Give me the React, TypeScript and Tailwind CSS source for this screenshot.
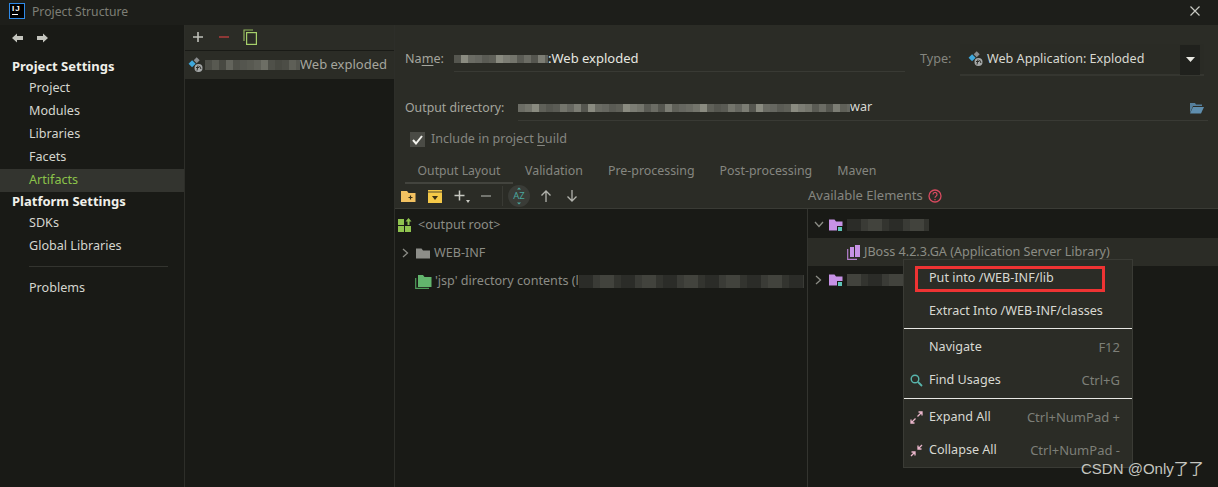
import React from "react";

const PAL = ["#5f6058", "#6b6c64", "#7c7d74", "#5a5b54", "#8a8b80", "#666760", "#55564f", "#74756c"];
const DARK = ["#2b2c28", "#383934", "#33342f", "#42433d", "#2e2f2a", "#3a3b36"];

function Blur({ w, h = 10, seed = 1, dark = false, cls = "" }: { w: number; h?: number; seed?: number; dark?: boolean; cls?: string }) {
  const pal = dark ? DARK : PAL;
  const n = Math.ceil(w / 7);
  return (
    <span className={"inline-flex shrink-0 overflow-hidden blur-[0.6px] " + cls} style={{ width: w, height: h }}>
      {Array.from({ length: n }, (_, i) => (
        <span key={i} className="block h-full w-[7px] shrink-0" style={{ background: pal[(i * 5 + seed * 3 + ((i * i) % 3)) % pal.length] }} />
      ))}
    </span>
  );
}

function WebIcon({ cls = "" }: { cls?: string }) {
  return (
    <svg width="16" height="16" viewBox="0 0 16 16" className={"shrink-0 " + cls}>
      <rect x="1.6" y="4.2" width="5" height="5" transform="rotate(45 4.1 6.7)" fill="#3fa8dc" />
      <rect x="6.6" y="1.2" width="4.2" height="4.2" transform="rotate(45 8.7 3.3)" fill="#8a8d8f" />
      <circle cx="10.5" cy="11" r="4" fill="#a5a8a8" />
      <path d="M8 10.5h3M10 8.5l-1 5M11.5 9l1.5 3" stroke="#2b2b26" strokeWidth="1" fill="none" />
    </svg>
  );
}

function FolderIcon({ color = "#8d8e89" }: { color?: string }) {
  return (
    <svg width="16" height="16" viewBox="0 0 16 16" className="shrink-0">
      <path d="M1 3.5h5.5l1.5 2h7v8H1z" fill={color} />
    </svg>
  );
}

function ModFolder() {
  return (
    <svg width="16" height="16" viewBox="0 0 16 16" className="shrink-0">
      <path d="M1 2.5h5.5l1.5 2h6.5v9H1z" fill="#c792e6" />
      <rect x="9.5" y="9.5" width="5" height="5" fill="#5fc4b8" stroke="#1a1b17" strokeWidth="1" />
    </svg>
  );
}

function SectionTitle({ children }: { children: React.ReactNode }) {
  return <div className="flex h-[20px] items-center pl-[12px] text-[13px] font-bold text-[#f0f0ea]">{children}</div>;
}

function NavItem({ children, active = false }: { children: React.ReactNode; active?: boolean }) {
  return (
    <div className={"flex h-[23px] items-center pl-[29px] " + (active ? "bg-[#33342f] text-[#8bc34a]" : "text-[#d5d6cf]")}>{children}</div>
  );
}

function U({ children }: { children: React.ReactNode }) {
  return <span className="underline underline-offset-2">{children}</span>;
}

function MenuRow({ icon, label, keys }: { icon?: React.ReactNode; label: string; keys?: string }) {
  return (
    <div className="flex h-[33px] items-center pr-[12px] text-[#d8d9d2]">
      <span className="flex w-[25px] shrink-0 justify-start pl-[6px]">{icon}</span>
      <span className="flex-1">{label}</span>
      {keys && <span className="text-[13px] text-[#7d7f78]">{keys}</span>}
    </div>
  );
}

function Sep() {
  return <div className="h-px bg-[#e8e8e4]" />;
}

export default function App() {
  return (
    <div className="flex h-[487px] w-[1218px] flex-col overflow-hidden bg-[#2b2c26] text-[12.6px] text-[#a5a69e] [font-family:'Noto_Sans',sans-serif]">
      {/* title bar */}
      <div className="flex h-[25px] shrink-0 items-center bg-[#1d1e1a]">
        <div className="mb-[3px] ml-[9px] flex h-[16px] w-[16px] flex-col border border-[#2f8ae8] bg-black pl-[2px] text-[8px] leading-[9px] font-bold tracking-[1px] text-white [font-family:'Liberation_Sans',sans-serif]">
          IJ
          <span className="mt-[1px] block h-[1px] w-[6px] bg-white" />
        </div>
        <span className="ml-[7px] text-[12.2px] text-[#7d7e76]">Project Structure</span>
        <svg width="12" height="12" viewBox="0 0 12 12" className="mr-[17px] mb-[3px] ml-auto">
          <path d="M1.5 1.5l9 9M10.5 1.5l-9 9" stroke="#c8c9c3" strokeWidth="1.2" />
        </svg>
      </div>

      <div className="flex min-h-0 flex-1">
        {/* sidebar */}
        <div className="flex w-[185px] shrink-0 flex-col border-r border-[#2d2e29] bg-[#191a16]">
          <div className="flex h-[32px] items-center gap-[14px] pb-[6px] pl-[12px]">
            <svg width="11" height="10" viewBox="0 0 11 10"><path d="M0 5l5-4.500V3h6v4H5v2.500z" fill="#c4c5be" /></svg>
            <svg width="11" height="10" viewBox="0 0 11 10"><path d="M11 5L6 .5V3H0v4h6v2.500z" fill="#c4c5be" /></svg>
          </div>
          <SectionTitle>Project Settings</SectionTitle>
          <NavItem>Project</NavItem>
          <NavItem>Modules</NavItem>
          <NavItem>Libraries</NavItem>
          <NavItem>Facets</NavItem>
          <NavItem active>Artifacts</NavItem>
          <SectionTitle>Platform Settings</SectionTitle>
          <NavItem>SDKs</NavItem>
          <NavItem>Global Libraries</NavItem>
          <div className="mt-[8px] mr-[16px] ml-[29px] h-px bg-[#33342f]" />
          <div className="mt-[10px]"><NavItem>Problems</NavItem></div>
        </div>

        {/* artifact list */}
        <div className="flex w-[210px] shrink-0 flex-col border-r border-[#2d2e29] bg-[#191a16]">
          <div className="flex h-[25px] items-center bg-[#2b2c26] pb-[1px] pl-[7px]">
            <svg width="12" height="12" viewBox="0 0 12 12"><path d="M6 1v10M1 6h10" stroke="#bfc0b9" strokeWidth="1.6" /></svg>
            <svg width="12" height="12" viewBox="0 0 12 12" className="ml-[14px]"><path d="M1 6h10" stroke="#a83b3b" strokeWidth="1.6" /></svg>
            <svg width="14" height="16" viewBox="0 0 14 16" className="ml-[13px]">
              <path d="M10 1H1v11" fill="none" stroke="#8fb35a" strokeWidth="1.2" />
              <rect x="3.6" y="3.6" width="9.8" height="11.8" fill="none" stroke="#a6cf6a" strokeWidth="1.2" />
            </svg>
          </div>
          <div className="mt-[1px] flex h-[28px] items-center bg-[#2b2c26] pl-[3px] text-[13px]">
            <WebIcon />
            <Blur w={95} h={10} seed={1} cls="ml-[1px] opacity-70" />
            <span>Web exploded</span>
          </div>
        </div>

        {/* detail */}
        <div className="flex min-w-0 flex-1 flex-col">
          <div className="mt-[19px] flex h-[32px] shrink-0 items-start">
            <span className="mt-[6px] ml-[10px] w-[49px]">Na<U>m</U>e:</span>
            <div className="flex h-[28px] w-[451px] items-center border-b border-[#393a34] pt-[2px]">
              <Blur w={94} h={8} seed={2} />
              <span className="text-[13px] text-[#e6e7e0]">:Web exploded</span>
            </div>
            <span className="mt-[6px] ml-[15px] w-[40px] text-[#85867f]">Type:</span>
            <div className="flex h-[32px] w-[244px] items-center border-b-2 border-[#353630] bg-[#2a2b25] pl-[8px]">
              <WebIcon />
              <span className="ml-[3px] pt-[1px] text-[#d8d9d2]">Web Application: Exploded</span>
              <span className="mt-[1px] mr-[4px] ml-auto flex h-[30px] w-[20px] items-center justify-center bg-[#20211d]">
                <svg width="9" height="5" viewBox="0 0 9 5"><path d="M0 0h9L4.500 5z" fill="#e8e8e2" /></svg>
              </span>
            </div>
          </div>
          <div className="mt-[19px] flex h-[26px] shrink-0 items-center">
            <span className="ml-[10px] w-[113px] text-[12.3px]">Output directory:</span>
            <div className="flex h-[26px] w-[690px] items-center border-b border-[#393a34]">
              <Blur w={332} h={8} seed={3} />
              <span className="text-[#d8d9d2]">war</span>
              <svg width="15" height="12" viewBox="0 0 15 12" className="mr-[4px] ml-auto">
                <path d="M1 1h5l1 1.500h6V4H4L1 11z" fill="#557f9c" />
                <path d="M4 5h11l-3 6.500H1z" fill="#5f8eae" />
              </svg>
            </div>
          </div>
          <div className="mt-[9px] flex h-[19px] shrink-0 items-center pl-[15px]">
            <span className="flex h-[15px] w-[15px] items-center justify-center bg-[#4a4b45]">
              <svg width="11" height="10" viewBox="0 0 11 10"><path d="M1 5l3 3.500L10 1" fill="none" stroke="#f2f2ec" strokeWidth="2" /></svg>
            </span>
            <span className="ml-[6px] text-[#858680]">Include in project <U>b</U>uild</span>
          </div>
          <div className="mt-[10px] flex h-[25px] shrink-0 items-start pl-[10px] text-[12.4px]">
            <div className="h-[25px] w-[108px] border-b-[2px] border-[#43443e] pt-[3px] text-center text-[12.2px] text-[#858680]">Output Layout</div>
            <div className="flex pt-[3px] pl-[12px] text-[#858680]">
              <span>Validation</span>
              <span className="ml-[25px]">Pre-processing</span>
              <span className="ml-[25px]">Post-processing</span>
              <span className="ml-[25px]">Maven</span>
            </div>
          </div>
          <div className="flex h-[25px] shrink-0 items-center border-b border-[#3a3b35]">
            <div className="flex w-[413px] items-center pl-[6px]">
              <svg width="15" height="13" viewBox="0 0 15 13"><path d="M0 1h6l1.500 2H14.500v9H0z" fill="#f3c261" /><path d="M7.500 7.500h4M9.500 5.500v4" stroke="#3a2f12" strokeWidth="1.200" /></svg>
              <svg width="14" height="13" viewBox="0 0 14 13" className="ml-[12px]"><path d="M0 0h14v13H0z" fill="#f5c948" /><path d="M0 2h14" stroke="#2b2c26" strokeWidth=".8" /><path d="M4 6h6L7 10z" fill="#3a2f12" /></svg>
              <svg width="12" height="12" viewBox="0 0 12 12" className="ml-[12px]"><path d="M5.500 .5v10M.5 5.500h10" stroke="#c8c9c2" strokeWidth="1.500" /></svg>
              <svg width="4" height="3" viewBox="0 0 4 3" className="mt-[11px]"><path d="M0 0h4L2 3z" fill="#c8c9c2" /></svg>
              <svg width="10" height="2" viewBox="0 0 10 2" className="ml-[11px]"><path d="M0 1h10" stroke="#8d8e88" strokeWidth="1.500" /></svg>
              <span className="ml-[11px] h-[20px] w-px bg-[#393a34]" />
              <span className="ml-[5px] flex h-[22px] w-[22px] items-center justify-center rounded-full bg-[#3a3c37]">
                <svg width="12" height="18" viewBox="0 0 12 18" className="absolute">
                  <path d="M4 2.500L6 .5l2 2zM4 15.500l2 2 2-2z" fill="#4aa79f" />
                </svg>
                <span className="text-[9.5px] leading-none text-[#4aa79f]">AZ</span>
              </span>
              <svg width="12" height="12" viewBox="0 0 12 12" className="ml-[10px]"><path d="M6 12V1M1.500 5.500L6 1l4.500 4.500" fill="none" stroke="#b2b3ad" strokeWidth="1.300" /></svg>
              <svg width="12" height="12" viewBox="0 0 12 12" className="ml-[14px]"><path d="M6 0v11M1.500 6.500L6 11l4.500-4.500" fill="none" stroke="#b2b3ad" strokeWidth="1.300" /></svg>
            </div>
            <span className="flex items-center text-[13px] text-[#858680]">
              Available Elements
              <svg width="14" height="14" viewBox="0 0 14 14" className="ml-[5px]">
                <circle cx="7" cy="7" r="6" fill="none" stroke="#d84a5f" strokeWidth="1.300" />
                <path d="M5 5.500a2 2 0 1 1 3 1.700c-.7.4-1 .8-1 1.500M7 10v1.300" fill="none" stroke="#d84a5f" strokeWidth="1.200" />
              </svg>
            </span>
          </div>

          {/* trees */}
          <div className="flex min-h-0 flex-1">
            <div className="w-[413px] shrink-0 overflow-hidden border-r border-[#33342f] bg-[#191a16] pt-[2px] text-[#8b8c85]">
              <div className="flex h-[28px] items-center pl-[3px]">
                <svg width="14" height="14" viewBox="0 0 14 14"><path d="M0 1h6v6H0zM0 8h6v6H0zM7 8h6v6H7z" fill="#8fc34f" /><path d="M10.500 0l3 3.500h-2V7h-2V3.500h-2z" fill="#8fc34f" /></svg>
                <span className="ml-[6px]">&lt;output root&gt;</span>
              </div>
              <div className="flex h-[28px] items-center pl-[7px]">
                <svg width="7" height="10" viewBox="0 0 7 10"><path d="M1 1l4.500 4L1 9" fill="none" stroke="#8b8c85" strokeWidth="1.300" /></svg>
                <span className="ml-[6px]"><FolderIcon /></span>
                <span className="ml-[3px]">WEB-INF</span>
              </div>
              <div className="flex h-[28px] items-center pl-[20px]">
                <svg width="17" height="15" viewBox="0 0 17 15" className="shrink-0">
                  <path d="M.7 4v10.300H14" fill="none" stroke="#4f9d5a" strokeWidth="1.200" />
                  <path d="M3 1h5l1.500 2H16.500v10H3z" fill="#62b56d" />
                </svg>
                <span className="ml-[3px] whitespace-nowrap">'jsp' directory contents (l</span>
                <Blur w={225} h={13} seed={4} dark />
              </div>
            </div>
            <div className="relative min-w-0 flex-1 bg-[#191a16] pt-[2px] text-[#8b8c85]">
              <div className="flex h-[27px] items-center pl-[6px]">
                <svg width="10" height="7" viewBox="0 0 10 7"><path d="M1 1l4 4.500L9 1" fill="none" stroke="#8b8c85" strokeWidth="1.300" /></svg>
                <span className="ml-[4px]"><ModFolder /></span>
                <Blur w={82} h={12} seed={2} dark cls="ml-[3px]" />
              </div>
              <div className="flex h-[28px] items-center bg-[#2b2c26] pl-[39px]">
                <svg width="14" height="15" viewBox="0 0 14 15" className="shrink-0">
                  <path d="M.7 4v10.300H10" fill="none" stroke="#b67fd0" strokeWidth="1.200" />
                  <path d="M3 2h4v10H3zM8 0h5v12H8z" fill="#c792e6" />
                </svg>
                <span className="ml-[3px] whitespace-nowrap">JBoss 4.2.3.GA (Application Server Library)</span>
              </div>
              <div className="flex h-[28px] items-center pl-[7px]">
                <svg width="7" height="10" viewBox="0 0 7 10"><path d="M1 1l4.500 4L1 9" fill="none" stroke="#8b8c85" strokeWidth="1.300" /></svg>
                <span className="ml-[6px]"><ModFolder /></span>
                <Blur w={70} h={12} seed={5} dark cls="ml-[3px]" />
              </div>

              {/* context menu */}
              <div className="absolute top-[50px] left-[95px] w-[230px] border border-[#3a3b35] bg-[#2b2c26] pt-[2px]">
                <div className="relative">
                  <span className="absolute top-[4px] left-[11px] h-[26px] w-[190px] border-[3px] border-[#ee3333]" />
                  <MenuRow label="Put into /WEB-INF/lib" />
                </div>
                <MenuRow label="Extract Into /WEB-INF/classes" />
                <Sep />
                <div className="mt-[2px]"><MenuRow label="Navigate" keys="F12" /></div>
                <MenuRow
                  label="Find Usages"
                  keys="Ctrl+G"
                  icon={<svg width="13" height="13" viewBox="0 0 13 13"><circle cx="5" cy="5" r="3.800" fill="none" stroke="#58b5ac" strokeWidth="1.400" /><path d="M8 8l4 4" stroke="#58b5ac" strokeWidth="1.800" /></svg>}
                />
                <div className="mt-[1px]"><Sep /></div>
                <div className="mt-[2px]">
                  <MenuRow
                    label="Expand All"
                    keys="Ctrl+NumPad +"
                    icon={<svg width="13" height="13" viewBox="0 0 13 13"><path d="M7.500 5.500L12 1M8.500 1H12v3.500" fill="none" stroke="#eab6cb" strokeWidth="1.300" /><path d="M5.500 7.500L1 12M1 8.500V12h3.500" fill="none" stroke="#eab6cb" strokeWidth="1.300" /></svg>}
                  />
                </div>
                <MenuRow
                  label="Collapse All"
                  keys="Ctrl+NumPad -"
                  icon={<svg width="13" height="13" viewBox="0 0 13 13"><path d="M12 1L8 5M8 1.500V5h3.500" fill="none" stroke="#eab6cb" strokeWidth="1.300" /><path d="M1 12l4-4M1.500 8H5v3.500" fill="none" stroke="#eab6cb" strokeWidth="1.300" /></svg>}
                />
              </div>

              <span className="absolute top-[251px] left-[273px] text-[15px] leading-[18px] whitespace-nowrap text-[#c5c6c0] [font-family:'Liberation_Sans','Noto_Sans_CJK_SC',sans-serif]">CSDN @Only了了</span>
            </div>
          </div>
        </div>
      </div>
    </div>
  );
}
